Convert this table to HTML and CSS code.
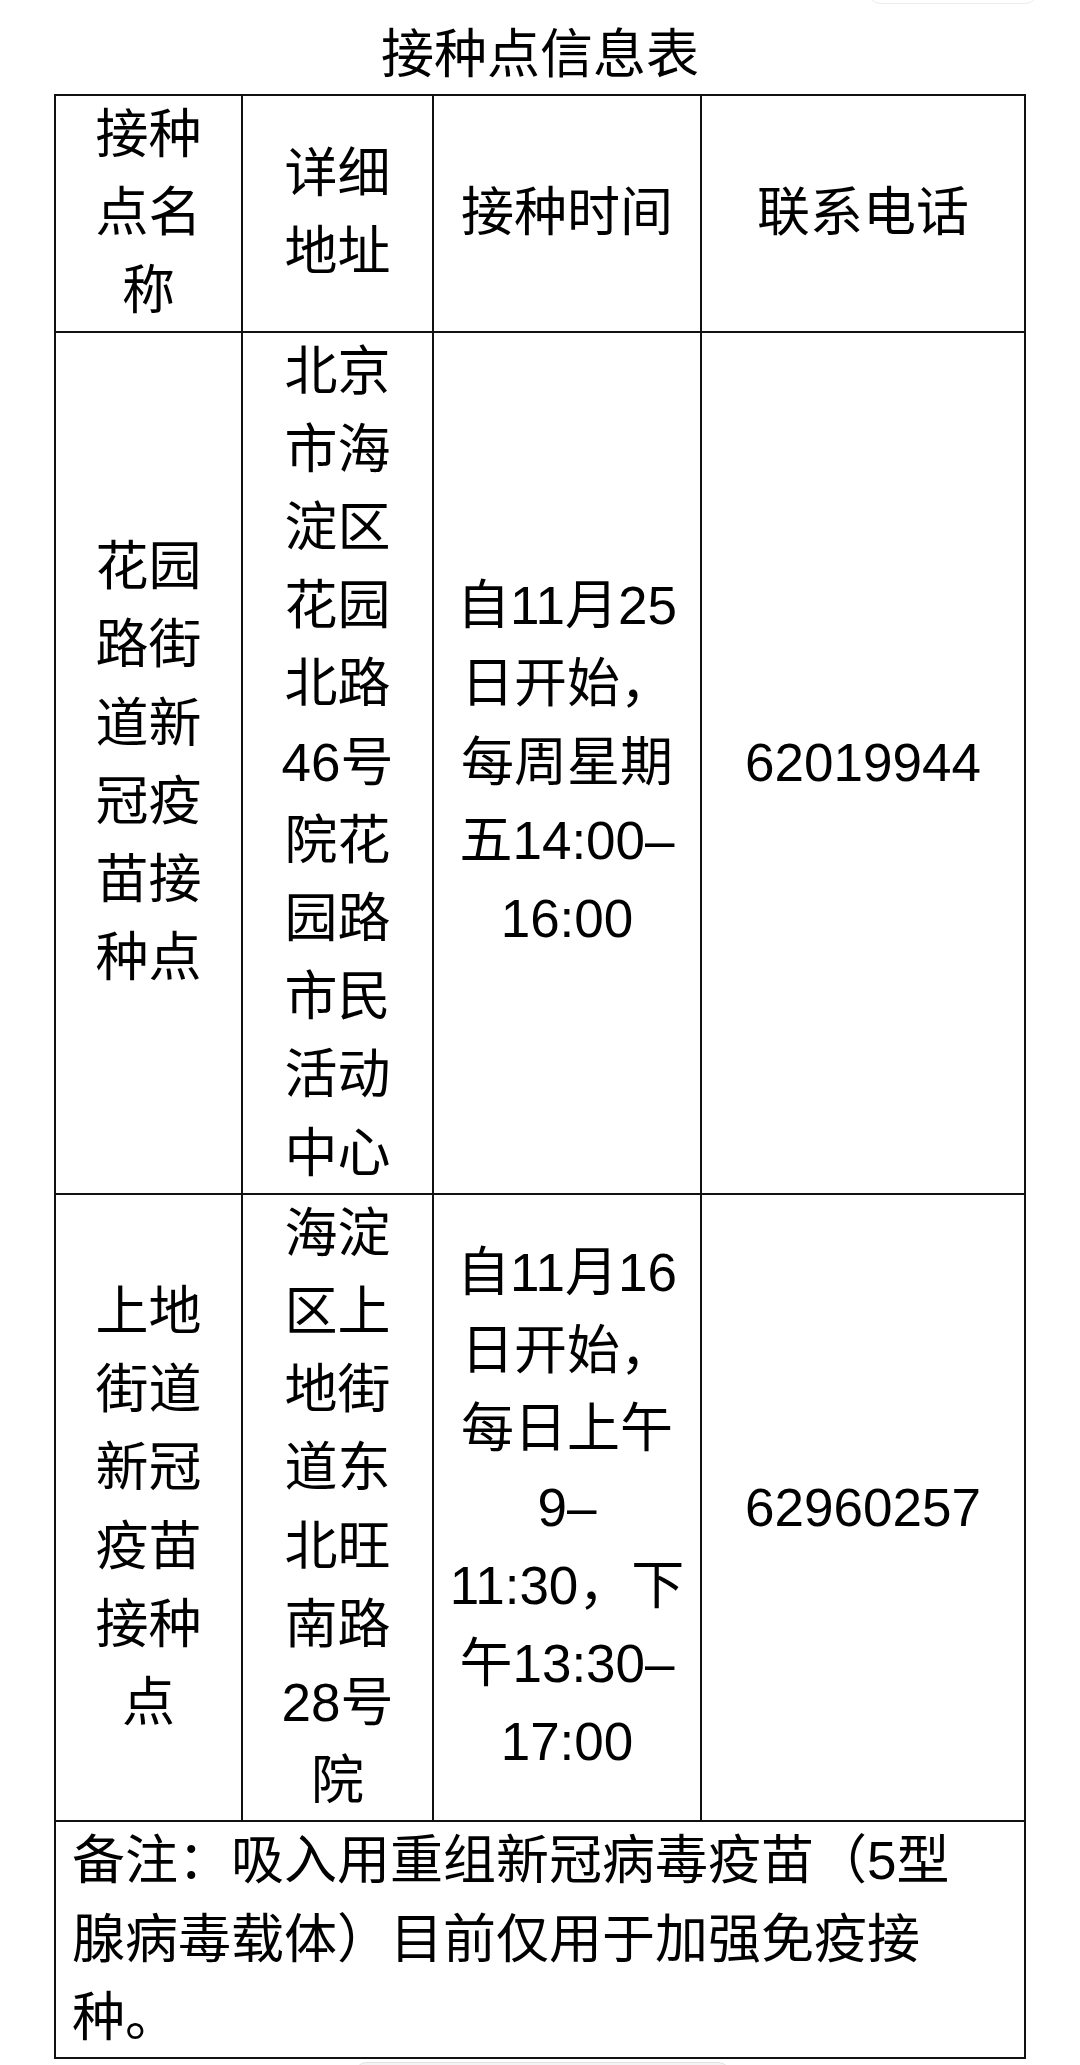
FILE: index.html
```html
<!DOCTYPE html>
<html lang="zh-CN">
<head>
<meta charset="utf-8">
<title>接种点信息表</title>
<link rel="stylesheet" href="styles.css">
</head>
<body>
<div class="page">
  <div class="edge-tab edge-top"></div>
  <h1 class="title">接种点信息表</h1>
  <table class="info">
    <colgroup>
      <col class="c-name"><col class="c-addr"><col class="c-time"><col class="c-tel">
    </colgroup>
    <thead>
      <tr>
        <th class="narrow">接种点名称</th>
        <th class="narrow">详细地址</th>
        <th class="time"><div class="time-text">接种时间</div></th>
        <th>联系电话</th>
      </tr>
    </thead>
    <tbody>
      <tr>
        <td class="narrow">花园路街道新冠疫苗接种点</td>
        <td class="narrow">北京市海淀区花园北路46号院花园路市民活动中心</td>
        <td class="time"><div class="time-text">自11月25日开始，每周星期五14:00–16:00</div></td>
        <td>62019944</td>
      </tr>
      <tr>
        <td class="narrow">上地街道新冠疫苗接种点</td>
        <td class="narrow">海淀区上地街道东北旺南路28号院</td>
        <td class="time"><div class="time-text">自11月16日开始，每日上午9–<br>11:30，下午13:30–17:00</div></td>
        <td>62960257</td>
      </tr>
      <tr>
        <td class="note" colspan="4">备注：吸入用重组新冠病毒疫苗（5型腺病毒载体）目前仅用于加强免疫接种。</td>
      </tr>
    </tbody>
  </table>
  <div class="edge-tab edge-bottom"></div>
</div>
</body>
</html>
```

FILE: styles.css
```css
html, body {
  margin: 0;
  padding: 0;
  background: #ffffff;
}

body {
  font-family: "Liberation Sans", "Noto Sans CJK SC", sans-serif;
  color: #000000;
}

.page {
  position: relative;
  width: 1080px;
  height: 2065px;
  overflow: hidden;
}

.title {
  margin: 16px 0 0;
  font-size: 53px;
  line-height: 78px;
  font-weight: normal;
  text-align: center;
}

.info {
  width: 970px;
  margin: 0 auto;
  border-collapse: collapse;
  table-layout: fixed;
  border: 2px solid #111111;
}

.c-name { width: 187px; }
.c-addr { width: 191px; }
.c-time { width: 268px; }
.c-tel  { width: 324px; }

.info th,
.info td {
  border: 2px solid #111111;
  padding: 0 8px;
  font-size: 53px;
  line-height: 78.2px;
  font-weight: normal;
  text-align: center;
  vertical-align: middle;
}

.info .narrow {
  padding: 0 16px;
}

.info .time {
  padding: 0;
}

.time-text {
  max-width: 241px;
  margin: 0 auto;
}

.info .note {
  text-align: left;
  padding: 0 32px 0 16px;
}

.edge-tab {
  position: absolute;
  background: #ffffff;
  border: 1px solid #ececec;
  border-radius: 14px;
}

.edge-top {
  left: 867px;
  top: -40px;
  width: 170px;
  height: 42px;
}

.edge-bottom {
  left: 353px;
  top: 2062px;
  width: 377px;
  height: 40px;
  background: #f4f4f4;
  border-color: #e2e2e2;
}
```
